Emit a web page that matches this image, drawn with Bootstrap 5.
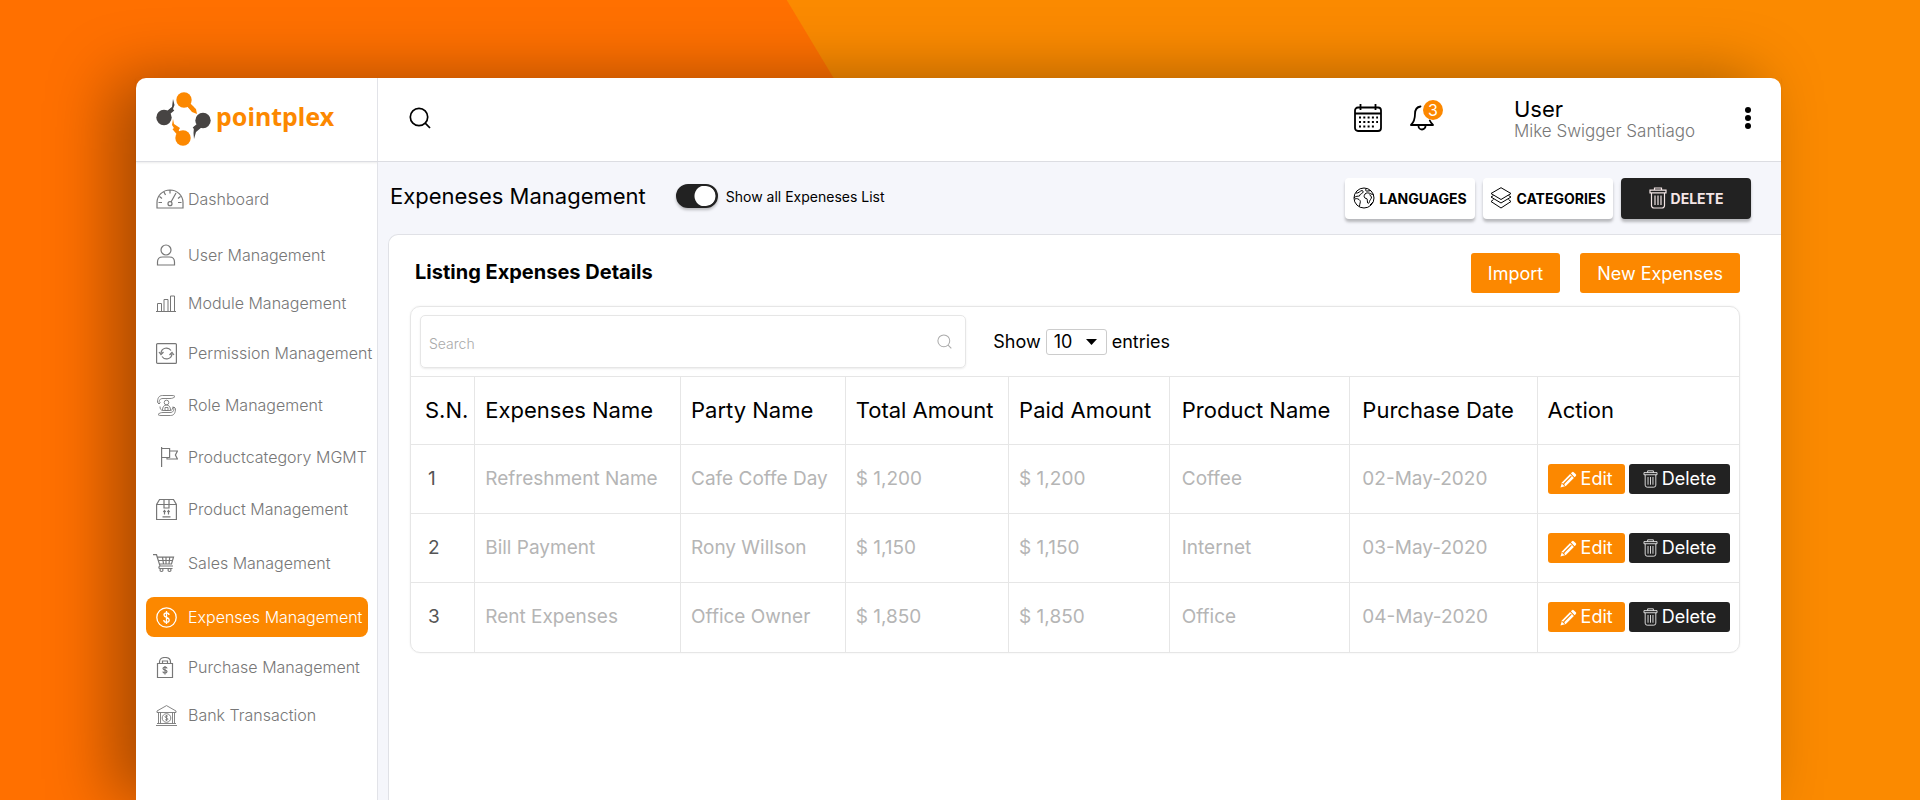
<!DOCTYPE html>
<html lang="en">
<head>
<meta charset="utf-8">
<meta name="viewport" content="width=device-width, initial-scale=1">
<title>pointplex – Expenses Management</title>
<link href="https://cdn.jsdelivr.net/npm/bootstrap@5.3.0/dist/css/bootstrap.min.css" rel="stylesheet">
<style>
  :root { --brand: #fc8800; --ink: #222; --line: #e6e6e6; }
  body {
    font-family: Inter, "Open Sans", sans-serif;
    color: #000;
    padding: 78px 139px 0 136px;
    background: linear-gradient(59deg, #ff7000 calc(50% + 57px), #fb8a00 calc(50% + 58px));
    min-height: 100vh;
  }
  .window {
    min-height: calc(100vh - 78px);
    background: #fff;
    border-radius: 10px 10px 0 0;
    box-shadow: -24px 0 64px rgba(0, 0, 0, .35);
  }
  svg { fill: none; stroke: currentColor; flex: none; display: block; }
  .topbar { height: 84px; border-bottom: 1px solid #dcdde2; box-shadow: 0 1px 2px rgba(0, 0, 0, .08); }
  .topbar-main { padding: 0 30px 4px 31px; }
  .side-col { width: 242px; flex: none; border-right: 1px solid #e2e3e8; }
  .brand-link { padding: 0 0 2px 20px; color: var(--brand); text-decoration: none; }
  .brand-text { font: 700 25px/32px "Noto Sans", sans-serif; color: var(--brand); padding-bottom: 6px; }
  .icon-btn { background: none; border: 0; padding: 0; color: #000; position: relative; }
  .bell { margin: 0 80px 0 28px; }
  .count { position: absolute; top: -5px; right: -9px; width: 20px; height: 20px; border-radius: 50%;
    background: var(--brand); color: #fff; font-size: 16px; line-height: 20px; text-align: center; }
  .user { width: 231px; padding-top: 3px; }
  .user-name { font-size: 22px; line-height: 24px; }
  .user-full { font-size: 17px; line-height: 20px; color: #777; font-weight: 300; }

  .side-menu { padding: 17px 9px 0 10px; }
  .side-menu a { display: flex; align-items: center; height: 40px; padding-left: 10px; border-radius: 8px;
    color: #777; font-size: 16px; font-weight: 300; text-decoration: none; white-space: nowrap; }
  .side-menu a.active { background: var(--brand); color: #fff; }
  .side-menu .slot { width: 32px; flex: none; }
  .gap-a { margin-top: 8px; } .gap-b { margin-top: 10px; } .gap-c { margin-top: 12px; }
  .gap-d { margin-top: 14px; } .gap-e { margin-top: 16px; }

  .main-col { background: #f5f6fb; min-width: 0; }
  .toolbar { height: 72px; padding: 0 30px 0 12px; }
  .toolbar h1 { font-size: 22px; line-height: 28px; font-weight: 400; margin: 0 30px 4px 0; }
  .toggle.form-check-input { width: 42px; height: 24px; margin: 0; border: 2px solid var(--ink); background-color: var(--ink);
    background-image: radial-gradient(circle, #fff 10px, transparent 11px); background-size: 22px 22px;
    background-position: right center; box-shadow: 0 2px 3px rgba(0, 0, 0, .25); }
  .toggle-label { font-size: 14px; }
  .tool { width: 130px; height: 41px; font-size: 14px; font-weight: 700; padding: 0; border: 0; border-radius: 4px;
    background: #fff; color: #000; box-shadow: 0 3px 3px rgba(0, 0, 0, .25); }
  .tool-dark { background: var(--ink); color: #f4e6e6; }

  .panel { margin-left: 10px; padding: 18px 41px 18px 21px; background: #fff; border: solid #e0e1e6; border-width: 1px 0 0 1px;
    border-radius: 10px 0 0 0; }
  .panel h2 { font-size: 20px; line-height: 24px; font-weight: 700; margin: 0 0 2px 5px; }
  .btn-brand { height: 40px; padding: 0 17px; border: 0; border-radius: 3px; background: var(--brand); color: #fff; font-size: 18px; }
  .panel-actions { gap: 20px; }
  .list-box { margin-top: 13px; border: 1px solid var(--line); border-radius: 10px; box-shadow: 0 0 2px rgba(0, 0, 0, .08); }
  .filters { padding: 8px 9px; }
  .search-box { width: 41.7%; height: 53px; padding: 0 13px 0 8px; border: 1px solid var(--line); border-radius: 5px;
    box-shadow: 0 1px 2px rgba(0, 0, 0, .08); color: #aaa; }
  .search-box input { border: 0; outline: 0; background: none; font-size: 14px; font-weight: 300; height: 40px; padding: 3px 0 0; color: #444; }
  .search-box input::placeholder { color: #aaa; }
  .entries { font-size: 18px; margin-left: 27px; gap: 5px; }
  .entries .form-select { width: 61px; height: 26px; padding: 0 0 0 7px; border: 1px solid #ccc; border-radius: 3px; font-size: 18px;
    line-height: 24px; color: #000; background-position: right 9px center; background-size: 11px 6px;
    background-image: url("data:image/svg+xml,%3csvg xmlns='http://www.w3.org/2000/svg' viewBox='0 0 11 6'%3e%3cpath d='M0 0h11L5.500 6z'/%3e%3c/svg%3e"); }

  .grid-table { table-layout: fixed; margin: 0; --bs-table-bg: transparent; }
  .grid-table tr > * { height: 69px; padding: 0 0 0 12px; vertical-align: middle; white-space: nowrap;
    border: solid var(--line); border-width: 1px 0 0 1px; }
  .grid-table tr > :first-child { border-left: 0; padding-left: 14px; }
  .grid-table tr > :nth-child(n+2):nth-child(-n+5) { padding-left: 10px; }
  .grid-table tr > :last-child { padding-left: 10px; }
  .grid-table tr > th { height: 68px; font-size: 22px; font-weight: 400; color: #000; }
  .grid-table td { font-size: 19px; color: #b5b5b5; }
  .grid-table tbody tr > :first-child { color: #555; padding-left: 17px; }
  .c1 { width: 4.8% } .c2 { width: 15.5% } .c3 { width: 12.4% } .c4 { width: 12.3% }
  .c5 { width: 12.1% } .c6 { width: 13.6% } .c7 { width: 14.1% } .c8 { width: 15.2% }
  .act { height: 30px; padding: 0 12px; border: 0; border-radius: 3px; color: #fff; font-size: 18px; line-height: 30px; }
  .act-edit { background: var(--brand); }
  .act-del { background: var(--ink); padding: 0 14px; }
</style>
</head>
<body>

<svg width="0" height="0" class="position-absolute" aria-hidden="true">
  <symbol id="i-search" viewBox="0 0 22 22"><circle cx="10" cy="10" r="8.700"/><path d="M16.200 16.200 21 21"/></symbol>
  <symbol id="i-trash" viewBox="0 0 18 22">
    <path d="M2.500 6v12.500a2.500 2.500 0 0 0 2.500 2.500h8a2.500 2.500 0 0 0 2.500-2.500V6M1 3.200h16v2.600H1zM5.500 3V1h7v2M6 8.500v9.500M9 8.500v9.500M12 8.500v9.500"/>
  </symbol>
  <symbol id="i-pencil" viewBox="0 0 18 18">
    <path fill="currentColor" stroke="none" d="M12.800 1.200a1.200 1.200 0 0 1 1.700 0l2.300 2.300a1.200 1.200 0 0 1 0 1.700l-1.300 1.300-4-4z"/>
    <path fill="currentColor" stroke="none" d="m10.700 3.300 4 4-8.500 8.500L.500 17.500l1.700-5.700z"/>
    <path stroke="#fc8800" stroke-width="1.200" d="m12 5.500-8 8M2.500 13l2.500 2.500"/>
  </symbol>
</svg>

<div class="window d-flex flex-column">
  <header class="topbar d-flex">
    <div class="side-col d-flex">
      <a href="#" class="brand-link d-flex align-items-center" aria-label="pointplex">
        <svg width="56" height="54" viewBox="0 0 56 54">
          <g stroke="none">
            <g fill="#474443"><circle cx="8" cy="25.500" r="7.700"/><path d="m11 19 5-4 1-8 1.500 6-1.500 4-4 5zM38 35l5-3 3 3-6 5-2 7-.500-6z"/><circle cx="47" cy="28.500" r="7.700"/></g>
            <g fill="#fc8800"><circle cx="28" cy="8" r="7.700"/><path d="m33 11 7 6 1 5-5-2-6-7zM17 27l1 5 6 4-3 5-5-8z"/><circle cx="27" cy="46" r="7.700"/></g>
            <g stroke="#474443" stroke-width="4"><path d="m11 22 6-5M44 32l-6 5"/></g>
            <g stroke="#fc8800" stroke-width="4"><path d="m31 11 6 6M24 43l-6-7"/></g>
          </g>
        </svg>
        <span class="brand-text ms-1">pointplex</span>
      </a>
    </div>
    <div class="topbar-main flex-grow-1 d-flex align-items-center">
      <button type="button" class="icon-btn" aria-label="Search"><svg width="22" height="22" stroke-width="1.700"><use href="#i-search"/></svg></button>
      <button type="button" class="icon-btn ms-auto" aria-label="Calendar">
        <svg width="28" height="28" viewBox="0 0 28 28" stroke-width="1.800"><rect x="1" y="3.500" width="26" height="23.500" rx="3"/><path d="M1 9.500h26M6.500 0v6M21.500 0v6"/><path stroke-width="2" stroke-dasharray="2 2.300" d="M5 13.500h19M5 18h19M5 22.500h15"/></svg>
      </button>
      <button type="button" class="icon-btn bell" aria-label="Notifications, 3 new">
        <svg width="24" height="26" viewBox="0 0 24 26" stroke-width="1.800" stroke-linecap="round" stroke-linejoin="round"><path d="M10.500 1.500C7 2 5 5 5 9c0 6-1.500 8.500-4 11h22c-1.500-1.500-2.500-2.800-3.200-4.500M8.500 21a3.500 3.500 0 0 0 7 0"/></svg>
        <span class="count">3</span>
      </button>
      <div class="user">
        <div class="user-name">User</div>
        <div class="user-full">Mike Swigger Santiago</div>
      </div>
      <button type="button" class="icon-btn" aria-label="More">
        <svg width="6" height="22" viewBox="0 0 6 22"><g fill="#000" stroke="none"><circle cx="3" cy="3" r="3"/><circle cx="3" cy="11" r="3"/><circle cx="3" cy="19" r="3"/></g></svg>
      </button>
    </div>
  </header>

  <div class="d-flex flex-grow-1">
    <nav class="side-col" aria-label="Main">
      <ul class="side-menu list-unstyled mb-0">
        <li><a href="#"><span class="slot"><svg width="28" height="20" viewBox="0 0 28 20" stroke-width="1.200"><path d="M1 19v-5.500a13 12.500 0 0 1 26 0V19zM14 1v3.500M8 3l1.500 3M3.500 7.500l2.500 2M2.500 13.500h3.500M22 13.500h3.500M24.500 7.500l-2.500 2M20 4l-5 9"/><circle cx="14" cy="14.700" r="2"/></svg></span>Dashboard</a></li>
        <li class="gap-e"><a href="#"><span class="slot"><svg width="20" height="22" viewBox="0 0 20 22" stroke-width="1.200"><circle cx="10" cy="6" r="5"/><path d="M1.500 21v-3c0-3 2-5 5-5h7c3 0 5 2 5 5v3z"/></svg></span>User Management</a></li>
        <li class="gap-a"><a href="#"><span class="slot"><svg width="20" height="17" viewBox="0 0 20 17"><path d="M0 16.500h20M1.500 16V8.500h4V16M8 16V4.500h4V16M14.500 16V1h4v15"/></svg></span>Module Management</a></li>
        <li class="gap-b"><a href="#"><span class="slot"><svg width="21" height="21" viewBox="0 0 21 21" stroke-width="1.200"><rect x=".600" y=".600" width="19.800" height="19.800" rx="1"/><path d="M5 10a5.500 5.500 0 0 1 10-2.500M16 11a5.500 5.500 0 0 1-10 2.500M3 9l2 2.500L7.500 9M18 12l-2-2.500L13.500 12"/></svg></span>Permission Management</a></li>
        <li class="gap-c"><a href="#"><span class="slot"><svg width="21" height="21" viewBox="0 0 21 21" stroke-width=".900"><path d="M1.500 7.500 3 9l1.500-1.500M3 9C3 5 4 3.500 7 3.500h7c2 0 3.500-.500 5-2-1-.800-1.500-1-3-1H6.500C3 .500 1.500 3 1.500 7.500M19.500 13.500 18 12l-1.500 1.500M18 12c0 4-1 5.500-4 5.500H7c-2 0-3.500.500-5 2 1 .800 1.500 1 3 1h9.500c3.500 0 5-2.500 5-7"/><circle cx="10.500" cy="7.500" r="2.300"/><path d="M6.500 15c0-3 1.500-5 4-5s4 2 4 5M4 11.500c0 2.500 1 4 3 4h7c2 0 3-1.500 3-4M9 12.500h3v3H9z"/></svg></span>Role Management</a></li>
        <li class="gap-c"><a href="#"><span class="slot"><svg width="22" height="20" viewBox="0 0 22 20" stroke-width="1.200"><path d="M5.600 0v20M5.600 1.500h8v9h-8M13.600 4h7.800l-2 4 2 4H11v-1.500"/></svg></span>Productcategory MGMT</a></li>
        <li class="gap-c"><a href="#"><span class="slot"><svg width="21" height="21" viewBox="0 0 21 21" stroke-width="1.200"><path d="M.600 5.500v15h19.800v-15l-3-5H3.600zM.600 5.500h19.800M8 .500v8.500h5V.500M6.500 17.800h8M8.500 15.500v-4M12.500 15.500v-4M7.300 13l1.200-1.500L9.700 13M11.300 13l1.200-1.500 1.200 1.500"/></svg></span>Product Management</a></li>
        <li class="gap-d"><a href="#"><span class="slot"><svg width="21" height="18" viewBox="0 0 21 18" overflow="visible" stroke-width="1.200"><path d="M-3 .700h3.500L4 12h13M1.300 3.200h16.200L15.500 10H3.500M2.500 6.500h14M6.500 3.200 7.500 10M10 3.200V10M13.700 3.200 13 10M4 12c-1.500.500-1.500 2.500 0 2.500h12.500"/><circle cx="5.500" cy="16" r="1.500"/><circle cx="13.500" cy="16" r="1.500"/></svg></span>Sales Management</a></li>
        <li class="gap-d"><a href="#" class="active" aria-current="page"><span class="slot"><svg width="21" height="21" viewBox="0 0 21 21" stroke-width="1.300"><circle cx="10.500" cy="10.500" r="9.700"/><path d="M13 8c0-1.300-1-2.200-2.500-2.200S8 6.600 8 8c0 3 5.200 1.800 5.200 5 0 1.400-1.100 2.300-2.700 2.300S7.800 14.300 7.800 13M10.500 4v13"/></svg></span>Expenses Management</a></li>
        <li class="gap-b"><a href="#"><span class="slot"><svg width="18" height="21" viewBox="0 0 18 21" stroke-width="1.200"><path d="M1.500 6.500h15v14h-15zM3.500 6.500V5c0-3 2-4.500 5.500-4.500s5.500 1.500 5.500 4.500v1.500M6.500 6.500V4h5v2.500M11 11.500c0-1-1-1.400-2-1.400s-2 .5-2 1.500c0 2 4 1 4 3 0 1-1 1.500-2 1.500s-2-.5-2-1.500M9 9v8.500"/></svg></span>Purchase Management</a></li>
        <li class="gap-a"><a href="#"><span class="slot"><svg width="21" height="21" viewBox="0 0 21 21" stroke-width=".900"><path d="M1 6 10.500.600 20 6v1.500H1zM0 20.500h21M1 18.500h19M2.500 7.500v11M4.500 7.500v11M16.500 7.500v11M18.500 7.500v11"/><circle cx="10.500" cy="13" r="4.300"/><path d="M12 11.500c-.500-1-3-1-3 .200 0 1.500 3 .900 3 2.400 0 1.300-2.500 1.300-3 .200M10.500 10v6"/></svg></span>Bank Transaction</a></li>
      </ul>
    </nav>

    <main class="main-col flex-grow-1 d-flex flex-column">
      <div class="toolbar d-flex align-items-center">
        <h1>Expeneses Management</h1>
        <div class="form-check form-switch d-flex align-items-center gap-2 p-0 mb-1">
          <input class="form-check-input toggle" type="checkbox" role="switch" id="showAll" checked>
          <label class="toggle-label" for="showAll">Show all Expeneses List</label>
        </div>
        <div class="d-flex gap-2 ms-auto">
          <button type="button" class="btn tool d-flex align-items-center justify-content-center gap-1">
            <svg width="22" height="22" viewBox="0 0 22 22"><circle cx="11" cy="11" r="10"/><path d="M3 6c3 .500 3.500-2 6-2.500 1 0 1.500 1.500.500 2.500-1.500 1-3 1.500-3 3-1.500.500-3.500-.500-5.500 2M2 12c1.500-1 4 0 5 1.500 1 1.500-.500 3-.500 6M13 2c-1 1.500 0 2.500 2 2l3-.500M12 7c1-1.500 4-1.500 6 0l2.500.500M12 7c-1.500 2-1 4 1 4.500 2 0 1 2 1.500 3.500 0 2 1.500 2 2-.500.500-2 2-2.500 2-4.500l-2-2.500M17 18l3-3"/></svg>LANGUAGES</button>
          <button type="button" class="btn tool d-flex align-items-center justify-content-center gap-1">
            <svg width="22" height="22" viewBox="0 0 22 22" stroke-linejoin="round"><path d="M11 .700 21 6.500 11 12.500 1 6.500zM3.500 8.500 1 10l10 6 10-6-2.500-1.500M3.500 12.500 1 14.500l10 6.500 10-6.500-2.500-2"/></svg>CATEGORIES</button>
          <button type="button" class="btn tool tool-dark d-flex align-items-center justify-content-center gap-1">
            <svg width="18" height="22" stroke-width="1.200"><use href="#i-trash"/></svg>DELETE</button>
        </div>
      </div>

      <section class="panel flex-grow-1">
        <div class="d-flex align-items-center justify-content-between">
          <h2>Listing Expenses Details</h2>
          <div class="panel-actions d-flex">
            <button type="button" class="btn btn-brand">Import</button>
            <button type="button" class="btn btn-brand">New Expenses</button>
          </div>
        </div>

        <div class="list-box">
          <div class="filters d-flex align-items-center">
            <div class="search-box d-flex align-items-center">
              <input type="search" class="flex-grow-1" placeholder="Search" aria-label="Search expenses">
              <svg width="15" height="15" stroke-width="1.500"><use href="#i-search"/></svg>
            </div>
            <div class="entries d-flex align-items-center">
              <label for="pageSize">Show</label>
              <select id="pageSize" class="form-select"><option>10</option><option>25</option><option>50</option></select>
              <span>entries</span>
            </div>
          </div>
          <table class="table grid-table">
            <colgroup><col class="c1"><col class="c2"><col class="c3"><col class="c4"><col class="c5"><col class="c6"><col class="c7"><col class="c8"></colgroup>
            <thead>
              <tr><th scope="col">S.N.</th><th scope="col">Expenses Name</th><th scope="col">Party Name</th><th scope="col">Total Amount</th><th scope="col">Paid Amount</th><th scope="col">Product Name</th><th scope="col">Purchase Date</th><th scope="col">Action</th></tr>
            </thead>
            <tbody>
              <tr><td>1</td><td>Refreshment Name</td><td>Cafe Coffe Day</td><td>$ 1,200</td><td>$ 1,200</td><td>Coffee</td><td>02-May-2020</td>
                <td><div class="d-flex gap-1"><button type="button" class="btn act act-edit d-flex align-items-center gap-1"><svg width="17" height="17"><use href="#i-pencil"/></svg>Edit</button><button type="button" class="btn act act-del d-flex align-items-center gap-1"><svg width="15" height="18"><use href="#i-trash"/></svg>Delete</button></div></td></tr>
              <tr><td>2</td><td>Bill Payment</td><td>Rony Willson</td><td>$ 1,150</td><td>$ 1,150</td><td>Internet</td><td>03-May-2020</td>
                <td><div class="d-flex gap-1"><button type="button" class="btn act act-edit d-flex align-items-center gap-1"><svg width="17" height="17"><use href="#i-pencil"/></svg>Edit</button><button type="button" class="btn act act-del d-flex align-items-center gap-1"><svg width="15" height="18"><use href="#i-trash"/></svg>Delete</button></div></td></tr>
              <tr><td>3</td><td>Rent Expenses</td><td>Office Owner</td><td>$ 1,850</td><td>$ 1,850</td><td>Office</td><td>04-May-2020</td>
                <td><div class="d-flex gap-1"><button type="button" class="btn act act-edit d-flex align-items-center gap-1"><svg width="17" height="17"><use href="#i-pencil"/></svg>Edit</button><button type="button" class="btn act act-del d-flex align-items-center gap-1"><svg width="15" height="18"><use href="#i-trash"/></svg>Delete</button></div></td></tr>
            </tbody>
          </table>
        </div>
      </section>
    </main>
  </div>
</div>

<script src="https://cdn.jsdelivr.net/npm/bootstrap@5.3.0/dist/js/bootstrap.bundle.min.js"></script>
</body>
</html>
